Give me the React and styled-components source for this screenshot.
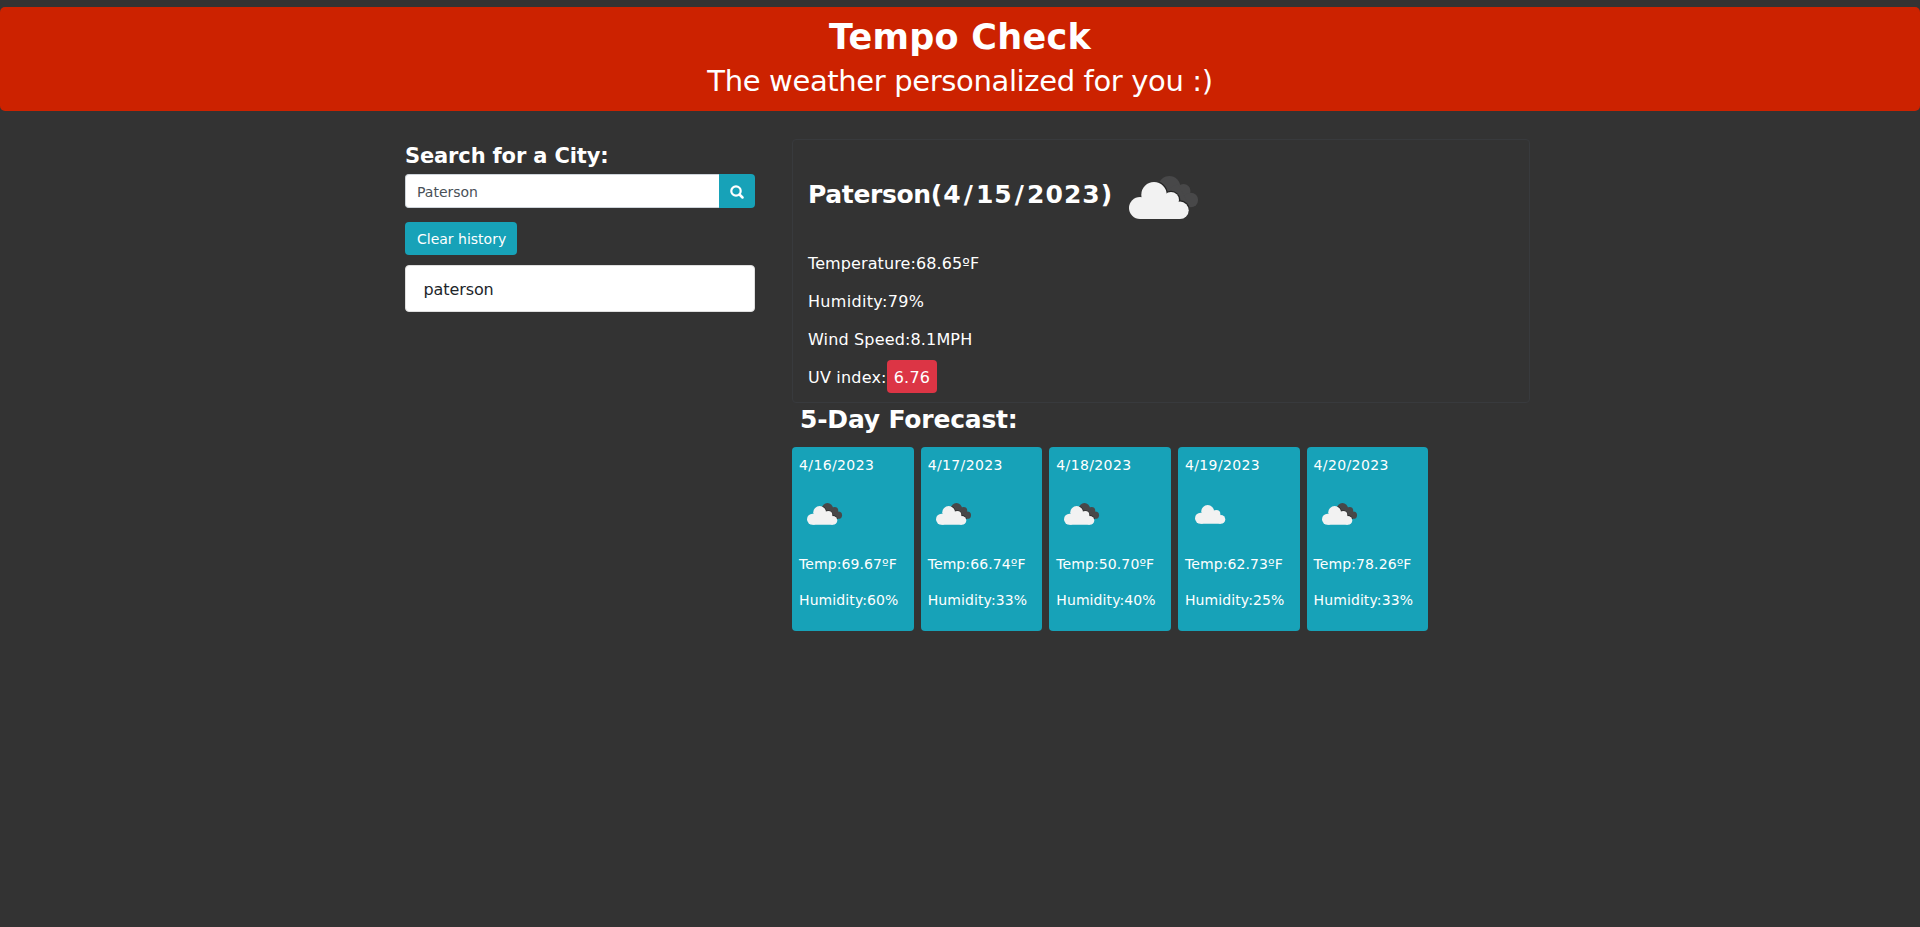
import React from "react";
import styled, { createGlobalStyle } from "styled-components";

const GlobalStyle = createGlobalStyle`
  *, *::before, *::after { box-sizing: border-box; }
  html, body { margin: 0; background: #333333; }
  body {
    color: #ffffff;
    font-family: Verdana, "DejaVu Sans", sans-serif;
    font-size: 16px;
    line-height: 24px;
  }
  h1, h2, h3, p { margin: 0; white-space: nowrap; }
`;

const Page = styled.div`
  min-height: 927px;
  padding-top: 7px;
  overflow: hidden;
`;

const Banner = styled.header`
  height: 104px;
  padding-top: 9px;
  border-radius: 5px;
  background: #cc2200;
  text-align: center;
`;

const Title = styled.h1`
  font-size: 35px;
  line-height: 42px;
  font-weight: 700;
  letter-spacing: 0.25px;
`;

const Tagline = styled.p`
  padding-top: 6px;
  font-size: 29px;
  line-height: 34px;
  letter-spacing: -0.36px;
`;

const Content = styled.main`
  display: flex;
  align-items: flex-start;
  gap: 37px;
  width: 1140px;
  margin: 28px auto 0;
  padding-left: 15px;
`;

const Sidebar = styled.aside`
  width: 350px;
`;

const SearchHeading = styled.h3`
  padding-top: 4px;
  height: 35px;
  font-size: 21px;
  line-height: 26px;
  font-weight: 700;
  letter-spacing: -0.14px;
`;

const SearchBar = styled.div`
  display: flex;
  height: 34px;
`;

const SearchInput = styled.input`
  flex: 1;
  min-width: 0;
  padding: 1px 11px 0;
  border: 1px solid #ced4da;
  border-right: 0;
  border-radius: 4px 0 0 4px;
  background: #ffffff;
  color: #495057;
  font: 14px Verdana, "DejaVu Sans", sans-serif;
`;

const SearchButton = styled.button`
  display: flex;
  align-items: center;
  justify-content: center;
  width: 36px;
  padding: 2px 0 0;
  border: 0;
  border-radius: 0 4px 4px 0;
  background: #17a2b8;
`;

const ClearButton = styled.button`
  display: block;
  width: 112px;
  height: 33px;
  margin-top: 14px;
  padding: 0 0 0 12px;
  border: 0;
  border-radius: 4px;
  background: #17a2b8;
  color: #ffffff;
  text-align: left;
  white-space: nowrap;
  font: 14px Verdana, "DejaVu Sans", sans-serif;
`;

const History = styled.ul`
  margin: 10px 0 0;
  padding: 0;
  list-style: none;
`;

const HistoryItem = styled.li`
  height: 47px;
  padding: 12px 17.5px;
  border: 1px solid #dfdfdf;
  border-radius: 4px;
  background: #ffffff;
  color: #212529;
  letter-spacing: -0.1px;
`;

const Results = styled.section`
  width: 738px;
`;

const Current = styled.article`
  height: 264px;
  padding: 22px 15px 0;
  border: 1px solid #383a3d;
  border-radius: 4px;
`;

const CurrentHead = styled.div`
  display: flex;
  height: 90px;
  gap: 16px;
`;

const CityName = styled.h2`
  width: 305px;
  padding-top: 16px;
  font-size: 25px;
  line-height: 33px;
  font-weight: 700;
  letter-spacing: -0.35px;
`;

const CityDate = styled.span`
  letter-spacing: 1.05px;
`;

const Slash = styled.span`
  padding: 0 2px;
`;

const CurrentIcon = styled.div`
  padding-top: 14px;
`;

const Reading = styled.p`
  display: flex;
  height: 38px;
  line-height: 24px;
  letter-spacing: ${(p) => p.$track || 0.1}px;
`;

const UvBadge = styled.span`
  height: 33px;
  margin-top: -6px;
  padding: 0 7px;
  border-radius: 4px;
  background: #dc3545;
  line-height: 36px;
  letter-spacing: 0.2px;
`;

const ForecastHeading = styled.h2`
  height: 44px;
  padding-left: 8px;
  font-size: 25px;
  line-height: 33px;
  font-weight: 700;
  letter-spacing: -0.2px;
`;

const Days = styled.div`
  display: grid;
  grid-template-columns: repeat(5, 121.65px);
  gap: 7px;
`;

const DayCard = styled.article`
  height: 184px;
  padding: 7px 7px 0;
  border-radius: 4px;
  background: #17a2b8;
  font-size: 14px;
`;

const DayLine = styled.p`
  height: 36px;
  line-height: 22px;
  letter-spacing: ${(p) => p.$track || 0.1}px;
`;

const DayIcon = styled.div`
  height: 63px;
  padding: ${(p) => (p.$single ? "13px 0 0 10px" : "13px 0 0 8px")};
`;

const Drawing = styled.svg`
  display: block;
`;

const FrontCloud = () => (
  <>
    <circle cx="11" cy="32" r="11" />
    <circle cx="25" cy="18.7" r="12.7" />
    <circle cx="42" cy="24" r="8" />
    <circle cx="51" cy="34.3" r="8.7" />
    <path d="M11 25H48L51 43H11z" />
  </>
);

const BackCloud = () => (
  <>
    <circle cx="40.3" cy="11" r="11" />
    <circle cx="54.5" cy="15" r="7" />
    <circle cx="61.8" cy="24" r="7.3" />
    <path d="M34 15L49 8L61 31H45z" />
  </>
);

function Clouds({ id, width, single }) {
  return (
    <Drawing width={width} height={(width * 44) / 70} viewBox={single ? "0 2 70 44" : "0 0 70 44"} aria-hidden="true">
      {!single && (
        <>
          <defs>
            <clipPath id={id}>
              <BackCloud />
            </clipPath>
          </defs>
          <g fill="#484849">
            <BackCloud />
          </g>
          <g clipPath={`url(#${id})`} fill="#242424" stroke="#242424" strokeWidth="2.6">
            <FrontCloud />
          </g>
        </>
      )}
      <g fill="#f2f2f2">
        <FrontCloud />
      </g>
    </Drawing>
  );
}

const SearchIcon = () => (
  <Drawing width="14" height="14" viewBox="0 0 14 14" fill="none" stroke="#ffffff" aria-hidden="true">
    <circle cx="6" cy="6" r="4.7" strokeWidth="2.2" />
    <path d="M9.5 9.5L12.5 12.5" strokeWidth="2.5" strokeLinecap="round" />
  </Drawing>
);

const forecast = [
  { date: "4/16/2023", temp: "69.67", humidity: 60 },
  { date: "4/17/2023", temp: "66.74", humidity: 33 },
  { date: "4/18/2023", temp: "50.70", humidity: 40 },
  { date: "4/19/2023", temp: "62.73", humidity: 25, single: true },
  { date: "4/20/2023", temp: "78.26", humidity: 33 },
];

export default function App() {
  return (
    <>
      <GlobalStyle />
      <Page>
        <Banner>
          <Title>Tempo Check</Title>
          <Tagline>The weather personalized for you :)</Tagline>
        </Banner>
        <Content>
          <Sidebar>
            <SearchHeading>Search for a City:</SearchHeading>
            <SearchBar>
              <SearchInput defaultValue="Paterson" aria-label="City" />
              <SearchButton aria-label="Search">
                <SearchIcon />
              </SearchButton>
            </SearchBar>
            <ClearButton>Clear history</ClearButton>
            <History>
              <HistoryItem>paterson</HistoryItem>
            </History>
          </Sidebar>
          <Results>
            <Current>
              <CurrentHead>
                <CityName>
                  Paterson
                  <CityDate>
                    (4<Slash>/</Slash>15<Slash>/</Slash>2023)
                  </CityDate>
                </CityName>
                <CurrentIcon>
                  <Clouds id="now" width={70} />
                </CurrentIcon>
              </CurrentHead>
              <Reading>Temperature:68.65ºF</Reading>
              <Reading $track={0.32}>Humidity:79%</Reading>
              <Reading $track={0.15}>Wind Speed:8.1MPH</Reading>
              <Reading $track={0.2}>
                UV index:<UvBadge>6.76</UvBadge>
              </Reading>
            </Current>
            <ForecastHeading>5-Day Forecast:</ForecastHeading>
            <Days>
              {forecast.map((day, i) => (
                <DayCard key={day.date}>
                  <DayLine $track={0.38}>{day.date}</DayLine>
                  <DayIcon $single={day.single}>
                    <Clouds id={`day${i}`} width={35.5} single={day.single} />
                  </DayIcon>
                  <DayLine>{`Temp:${day.temp}ºF`}</DayLine>
                  <DayLine>{`Humidity:${day.humidity}%`}</DayLine>
                </DayCard>
              ))}
            </Days>
          </Results>
        </Content>
      </Page>
    </>
  );
}
